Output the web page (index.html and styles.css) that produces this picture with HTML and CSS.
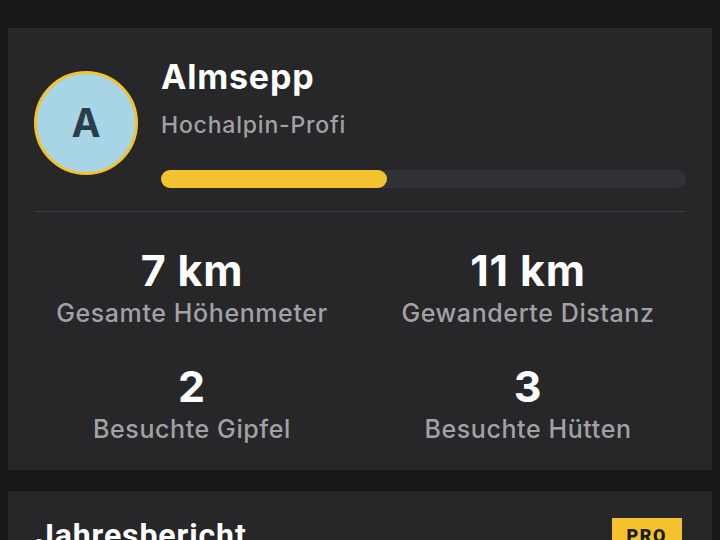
FILE: index.html
```html
<!DOCTYPE html>
<html lang="de">
<head>
  <meta charset="UTF-8">
  <title>Profil</title>
  <link rel="stylesheet" href="styles.css">
</head>
<body>

<div class="page">
  <section class="card profile">
    <div class="profile-head">
      <div class="avatar">A</div>
      <div class="profile-info">
        <div class="name">Almsepp</div>
        <div class="rank">Hochalpin-Profi</div>
        <div class="bar"><div class="bar-fill" style="width: 43%"></div></div>
      </div>
    </div>
    <div class="divider"></div>
    <div class="stats">
      <div class="stat">
        <div class="stat-value">7 km</div>
        <div class="stat-label">Gesamte Höhenmeter</div>
      </div>
      <div class="stat">
        <div class="stat-value">11 km</div>
        <div class="stat-label">Gewanderte Distanz</div>
      </div>
      <div class="stat">
        <div class="stat-value">2</div>
        <div class="stat-label">Besuchte Gipfel</div>
      </div>
      <div class="stat">
        <div class="stat-value">3</div>
        <div class="stat-label">Besuchte Hütten</div>
      </div>
    </div>
  </section>

  <section class="card report">
    <div class="report-head">
      <h2>Jahresbericht</h2>
      <span class="badge">PRO</span>
    </div>
  </section>
</div>

</body>
</html>
```

FILE: styles.css
```css
body {
  margin: 0;
  font-family: Inter, "Noto Sans", sans-serif;
  background-color: #17171a;
  color: #fff;
  overflow: hidden;
}
.page {
  padding: 28px 8px 0;
}
.card {
  background-color: #272729;
  padding: 0 26px;
}
.profile {
  padding-top: 29px;
  padding-bottom: 26px;
}
.profile-head {
  display: flex;
  align-items: center;
  gap: 23px;
}
.avatar {
  width: 98px;
  height: 98px;
  flex-shrink: 0;
  border-radius: 50%;
  border: 3px solid #f4c22f;
  background-color: #a8d5e6;
  color: #2a3d4d;
  font-size: 39px;
  font-weight: 700;
  display: flex;
  align-items: center;
  justify-content: center;
}
.profile-info {
  flex: 1;
}
.name {
  font-size: 34px;
  line-height: 40px;
  font-weight: 700;
  letter-spacing: 0.8px;
}
.rank {
  margin-top: 14px;
  font-size: 23px;
  line-height: 28px;
  font-weight: 500;
  letter-spacing: 0.8px;
  color: #a1a1a6;
}
.bar {
  margin-top: 31px;
  height: 18px;
  border-radius: 9px;
  background-color: #313136;
}
.bar-fill {
  height: 100%;
  border-radius: 9px;
  background-color: #f4c22f;
}
.divider {
  margin-top: 23px;
  height: 1px;
  background-color: #3c3c40;
}
.stats {
  margin-top: 34px;
  display: grid;
  grid-template-columns: 1fr 1fr;
  column-gap: 20px;
  row-gap: 34px;
  text-align: center;
}
.stat-value {
  font-size: 43px;
  line-height: 48px;
  font-weight: 700;
  letter-spacing: 0.8px;
}
.stat-label {
  margin-top: 4px;
  font-size: 25px;
  line-height: 30px;
  font-weight: 500;
  letter-spacing: 0.6px;
  color: #a1a1a6;
}
.report {
  margin-top: 21px;
  padding-top: 26px;
  height: 100px;
}
.report-head {
  display: flex;
  justify-content: space-between;
  align-items: flex-start;
}
.report-head h2 {
  margin: 0 0 0 2px;
  font-family: Roboto, sans-serif;
  font-size: 32px;
  line-height: 36px;
  font-weight: 700;
  letter-spacing: 0.9px;
}
.badge {
  margin-top: 1px;
  margin-right: 4px;
  padding: 7px 15px 5px;
  background-color: #f4c22f;
  color: #1c1c1e;
  font-family: Roboto, sans-serif;
  font-size: 18px;
  line-height: 22px;
  font-weight: 900;
  letter-spacing: 1.5px;
}
```
